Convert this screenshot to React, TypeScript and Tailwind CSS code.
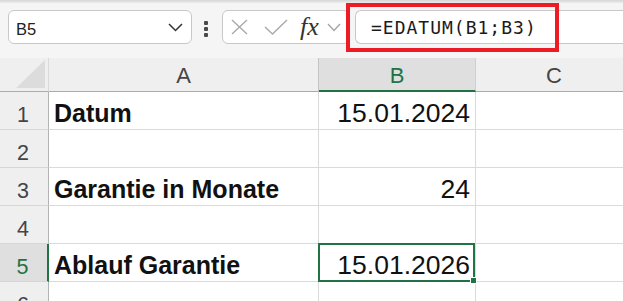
import React from "react";

const rows = [
  { n: "1", label: "Datum", value: "15.01.2024" },
  { n: "2", label: "", value: "" },
  { n: "3", label: "Garantie in Monate", value: "24" },
  { n: "4", label: "", value: "" },
  { n: "5", label: "Ablauf Garantie", value: "15.01.2026", active: true },
  { n: "6", label: "", value: "" },
];

const cell = "overflow-hidden whitespace-nowrap border-r border-b border-[#dadada] bg-white";

export default function App() {
  return (
    <div className="relative h-[301px] w-[623px] overflow-hidden bg-white font-['Liberation_Sans',Arial,sans-serif] text-[#111]">
      <div className="h-[3px] bg-gradient-to-b from-[#d6d6d6] to-[#ececec]" />

      {/* formula bar */}
      <div className="flex h-[55px] items-start bg-[#f5f5f5] pl-[8px] pt-[7px]">
        <div className="flex h-[34px] w-[184px] items-center rounded-[6px] border border-[#c8c8c8] bg-white pl-[7px] pt-[4px]">
          <span className="text-[16.5px] text-[#222]">B5</span>
          <svg className="ml-auto mr-[8px] -mt-[4px]" width="15" height="9" viewBox="0 0 15 9" fill="none">
            <path d="M1 1l6.5 6.5L14 1" stroke="#333" strokeWidth="1.5" />
          </svg>
        </div>

        <div className="ml-[12px] mt-[11px] flex flex-col gap-[2px]">
          <span className="size-[4px] rounded-[1px] bg-[#4a4a4a]" />
          <span className="size-[4px] rounded-[1px] bg-[#4a4a4a]" />
          <span className="size-[4px] rounded-[1px] bg-[#4a4a4a]" />
        </div>

        <div className="ml-[14px] flex h-[34px] w-[128px] items-center rounded-[6px] border border-[#c8c8c8] bg-white pl-[8px]">
          <svg width="17" height="16" viewBox="0 0 17 16" fill="none">
            <path d="M1 1l15 14M16 1L1 15" stroke="#a9a9a9" strokeWidth="1.4" />
          </svg>
          <svg className="ml-[16px]" width="24" height="16" viewBox="0 0 24 16" fill="none">
            <path d="M1 8l7.5 7L23 1" stroke="#a9a9a9" strokeWidth="1.4" />
          </svg>
          <span className="ml-[12px] font-['Liberation_Serif',serif] text-[26px] italic leading-none text-[#333]">
            fx
          </span>
          <svg className="ml-[8px]" width="14" height="9" viewBox="0 0 14 9" fill="none">
            <path d="M1 1l6 6.5L13 1" stroke="#a3a3a3" strokeWidth="1.3" />
          </svg>
        </div>

        <div className="ml-[5px] flex h-[34px] flex-1 items-center rounded-l-[6px] border border-r-0 border-[#c8c8c8] bg-white pl-[15px] pt-[1px]">
          <span className="font-['DejaVu_Sans_Mono',monospace] text-[18px] tracking-[1px] text-[#1a1a1a]">
            =EDATUM(B1;B3)
          </span>
        </div>
      </div>

      {/* highlight frame */}
      <div className="absolute left-[346px] top-[3px] h-[49px] w-[213px] border-4 border-[#ed1c24]" />

      {/* sheet */}
      <div className="grid grid-cols-[49px_270px_157px_157px] grid-rows-[34px_repeat(6,38px)]">
        <div className="flex items-end justify-end border-r border-b border-r-[#d9d9d9] border-b-[#ababab] bg-[#efefef] pb-[3px] pr-[3px]">
          <svg width="29" height="28" viewBox="0 0 29 28">
            <polygon points="29,0 29,28 0,28" fill="#dcdcdc" />
          </svg>
        </div>
        <div className="border-r border-b border-r-[#c4c4c4] border-b-[#ababab] bg-[#efefef] pt-[6px] text-center text-[22px] leading-[24px] text-[#444]">
          A
        </div>
        <div className="border-b-2 border-r border-r-[#d0d0d0] border-b-[#217346] bg-[#dfdfdf] pt-[6px] text-center text-[22px] leading-[24px] text-[#217346]">
          B
        </div>
        <div className="border-r border-b border-r-[#d0d0d0] border-b-[#ababab] bg-[#efefef] pt-[6px] text-center text-[22px] leading-[24px] text-[#444]">
          C
        </div>

        {rows.map((r) => (
          <React.Fragment key={r.n}>
            <div
              className={
                r.active
                  ? "border-b border-r-2 border-b-[#d6d6d6] border-r-[#217346] bg-[#dfdfdf] pr-[2px] pt-[8px] text-center text-[21.5px] leading-[30px] text-[#217346]"
                  : "border-b border-r border-b-[#d6d6d6] border-r-[#b3b3b3] bg-[#efefef] pr-[2px] pt-[8px] text-center text-[21.5px] leading-[30px] text-[#444]"
              }
            >
              {r.n}
            </div>
            <div className={`${cell} pl-[5px] pt-[6px] text-[25px] font-bold leading-[30px]`}>{r.label}</div>
            <div className={`${cell} ${r.active ? "relative overflow-visible" : ""} pr-[5px] pt-[6px] text-right text-[26.5px] leading-[30px]`}>
              {r.value}
              {r.active && (
                <span className="absolute -bottom-[1px] -left-[1px] right-0 -top-[1px] border-2 border-[#217346]">
                  <span className="absolute -bottom-[4px] -right-[4px] size-[7px] border border-white bg-[#217346]" />
                </span>
              )}
            </div>
            <div className={cell} />
          </React.Fragment>
        ))}
      </div>
    </div>
  );
}
